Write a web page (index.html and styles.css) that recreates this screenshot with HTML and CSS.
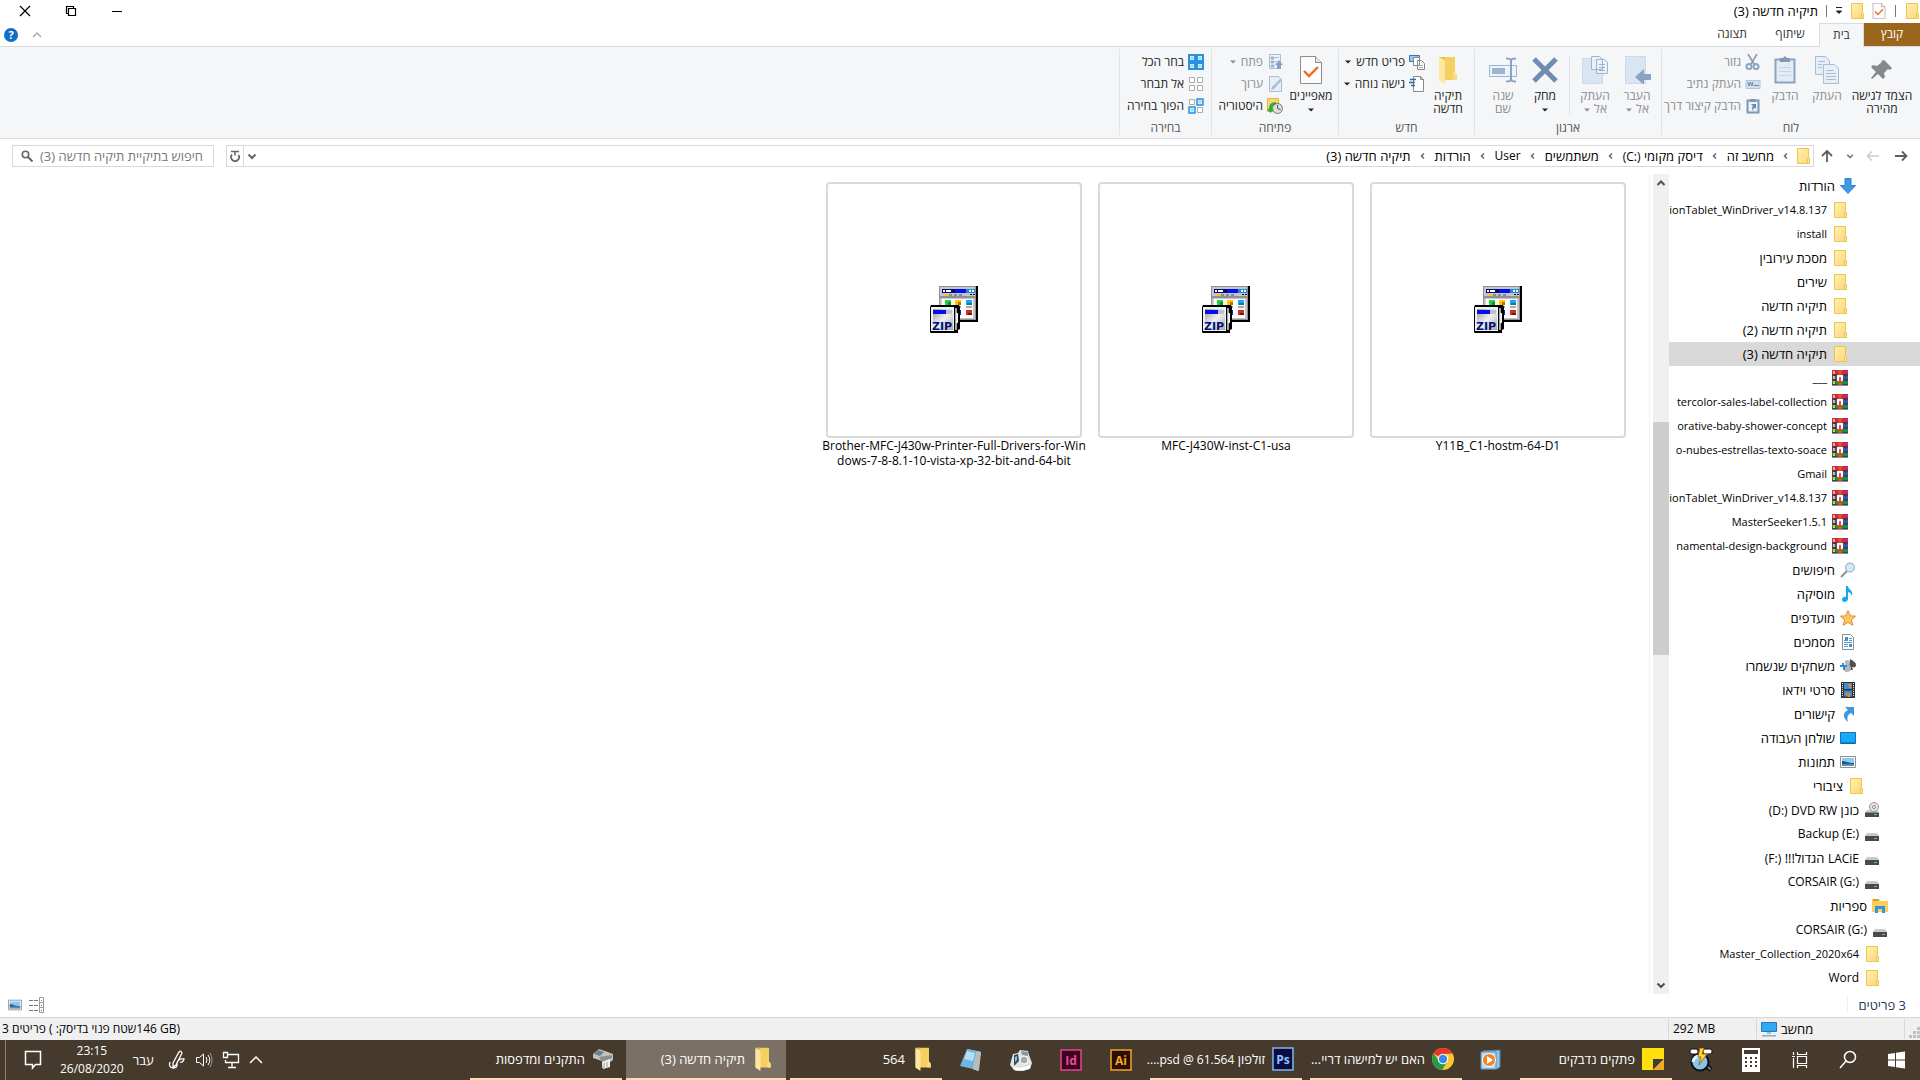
FILE: index.html
```
<!DOCTYPE html>
<html lang="he" dir="rtl">
  <head>
    <meta charset="UTF-8" />
    <meta name="viewport" content="width=device-width, initial-scale=1.0" />
    <title>תיקיה חדשה (3)</title>
    <link rel="stylesheet" href="styles.css" />
  </head>
  <body>
    <svg class="sprite" aria-hidden="true">
      <defs>
        <linearGradient id="gold" x1="0" y1="0" x2="1" y2="1">
          <stop offset="0" stop-color="#fff0ae" />
          <stop offset="1" stop-color="#fcd67e" />
        </linearGradient>
        <linearGradient id="silver" x1="0" y1="0" x2="1" y2="1">
          <stop offset="0" stop-color="#9a9a9a" />
          <stop offset="0.5" stop-color="#f0f0f0" />
          <stop offset="1" stop-color="#a8a8a8" />
        </linearGradient>
      </defs>
      <symbol id="i-folder" viewBox="0 0 16 16">
        <path d="M2.500 .5h11v9.500l1 1v4.500h-12z" fill="url(#gold)" stroke="#edc64a" />
        <path d="M12.500 15.500v-4.500l1-1 1 1v4.500z" fill="#ffe9a0" stroke="#edc64a" />
      </symbol>
      <symbol id="i-bigfolder" viewBox="0 0 20 28">
        <path d="M4 1h13v17l2 2v4H6z" fill="#f6cf61" />
        <path d="M1 1l6 3v24l-6-4z" fill="#fde7a0" />
        <path d="M1 1h6v3z" fill="#e9bd4a" />
        <path d="M15 15l4 4v5h-4z" fill="#f9da86" />
      </symbol>
      <symbol id="i-doccheck" viewBox="0 0 22 28">
        <path d="M.5 .5h15l6 6v21H.5z" fill="#fdfdfd" stroke="#8c8c8c" />
        <path d="M15.500 .5v6h6" fill="#e8e8e8" stroke="#8c8c8c" />
        <path d="M4 15l5 5 9-9" fill="none" stroke="#f26a1b" stroke-width="2.400" />
      </symbol>
      <symbol id="i-rar" viewBox="0 0 16 16">
        <path d="M0 0h16v5H0z" fill="#c8285c" />
        <path d="M0 5h16v5H0z" fill="#4450a8" />
        <path d="M0 10h16v5H0z" fill="#1c8c40" />
        <path d="M0 4.500h16v1H0zM0 9.500h16v1H0zM0 14.500h16v1H0z" fill="#401830" />
        <path d="M1 1h2v3H1zM1 6h2v3H1zM1 11h2v3H1z" fill="#f0b840" />
        <path d="M6 0h4v15H6z" fill="#d8501c" />
        <path d="M5 5h6v6H9V7H7v4H5z" fill="#fff" />
        <path d="M7 7h2v3H7z" fill="#e05a28" />
      </symbol>
      <symbol id="i-download" viewBox="0 0 16 16">
        <path d="M5 .5h6v7h4.500L8 15.500.5 7.500H5z" fill="#3d9be9" stroke="#2b7fc9" />
      </symbol>
      <symbol id="i-lens" viewBox="0 0 16 16">
        <path d="M1 15l6-6" stroke="#8f8f8f" stroke-width="2" />
        <circle cx="10" cy="5.500" r="4.500" fill="#c9ecf8" stroke="#9aa4aa" />
      </symbol>
      <symbol id="i-note" viewBox="0 0 16 16">
        <path d="M6 0h2c0 4 6 4 4 10-1-3-2-3.500-4-4v7c0 2-2 3-3.500 3S2 15 2 13.500 4 10 6 11z" fill="#17a5f5" />
      </symbol>
      <symbol id="i-star" viewBox="0 0 16 16">
        <path d="M8 .6l2.200 5.200 5.400.4-4.200 3.600 1.400 5.500L8 12.400l-4.800 2.900 1.400-5.500L.4 6.200l5.400-.4z" fill="#ffc85c" stroke="#d8903a" />
      </symbol>
      <symbol id="i-document" viewBox="0 0 16 16">
        <path d="M2.500 .5h8l3 3v12h-11z" fill="#fff" stroke="#8a8f94" />
        <path d="M4 6.500h4M9 4.500h3M9 6.500h3M4 8.500h8M4 10.500h4M4 12.500h4" fill="none" stroke="#4f95cf" />
        <path d="M5 3h3v3H5zM9 10h3v3H9z" fill="#3f8fd0" />
      </symbol>
      <symbol id="i-games" viewBox="0 0 16 16">
        <path d="M10 1c3 2 6 3 6 6 0 2-2 3-4 2l1 3H9V9z" fill="#55504b" />
        <path d="M7 2c2 0 3 2 2 3s2 3 2 5-1 4-4 4-3-2-3-4 2-4 1-5 0-3 2-3z" fill="#b5b8ba" />
        <path d="M0 7h2V5h2v2h3v2H5v3H3V9H0z" fill="#318ad4" />
      </symbol>
      <symbol id="i-video" viewBox="0 0 16 16">
        <path d="M1 0h14v16H1z" fill="#333" />
        <path d="M4 1h8v6H4zM4 8.500h8v6H4z" fill="#3b8ddb" />
        <path d="M8 2h3v4H9zM5 11h5v4H8z" fill="#d9872f" />
        <path d="M2.500 1v14M13.500 1v14" stroke="#ddd" stroke-dasharray="1 1" />
      </symbol>
      <symbol id="i-link" viewBox="0 0 16 16">
        <path d="M5 1h9v9l-3-3c-4 2-4 5-3 9-5-4-6-9 0-12z" fill="#3f97e0" />
      </symbol>
      <symbol id="i-desktop" viewBox="0 0 16 16">
        <path d="M.5 2.500h15v11H.5z" fill="#19a9fb" stroke="#1372b4" />
        <path d="M1 13h14" stroke="#0d5d97" />
      </symbol>
      <symbol id="i-picture" viewBox="0 0 16 16">
        <path d="M.5 2.500h15v11H.5z" fill="#fff" stroke="#8a8f94" />
        <path d="M2 4h12v8H2z" fill="#8cc8f2" />
        <path d="M2 7c4 0 5 2 12 2v1H2z" fill="#2a5574" />
        <path d="M2 10h12v2H2z" fill="#4f8fba" />
      </symbol>
      <symbol id="i-drive" viewBox="0 0 16 16">
        <path d="M3 7h10l2 3H1z" fill="#c9c9c9" />
        <path d="M1 10h14v5H1z" fill="#4a4a4a" />
        <path d="M10 12h3v1h-3z" fill="#3ce050" />
      </symbol>
      <symbol id="i-dvd" viewBox="0 0 16 16">
        <path d="M3 8h10l2 3H1z" fill="#c9c9c9" />
        <circle cx="10" cy="5" r="4.500" fill="#e4e4e4" stroke="#9a9a9a" />
        <circle cx="10" cy="5" r="1.500" fill="#fff" stroke="#888" />
        <path d="M1 10.500h14V15H1z" fill="#4a4a4a" />
        <path d="M10 12h3v1h-3z" fill="#3ce050" />
      </symbol>
      <symbol id="i-library" viewBox="0 0 16 16">
        <path d="M0 1h7l1 2h8v11H0z" fill="#f9cf5d" />
        <path d="M1 1h6v2H1z" fill="#e6951e" />
        <path d="M3 15V8h10v7h-3v-4H6v4z" fill="#3a93dd" />
      </symbol>
      <symbol id="i-monitor" viewBox="0 0 16 16">
        <path d="M.5 1.500h15v9H.5z" fill="#2fa8f5" stroke="#2b78ad" />
        <path d="M6 11h4v2H6z" fill="#9cc0d6" />
        <path d="M1 14h14v1.500H1z" fill="#7fb0cc" />
      </symbol>
      <symbol id="i-details" viewBox="0 0 16 16">
        <path d="M1 3.500h9M1 8.500h9M1 13.500h9" stroke="#777" stroke-dasharray="4 1" />
        <path d="M11.500 .5h4v15h-4zM11 5.500h5M11 10.500h5" fill="#fff" stroke="#999" />
        <path d="M13 3h1v1h-1zM13 8h1v1h-1z" fill="#3f8fd0" />
        <path d="M13 13h1v1h-1z" fill="#c33" />
      </symbol>
      <symbol id="i-zip" viewBox="0 0 48 48">
        <path d="M9 0h39v36H9z" fill="#000" />
        <path d="M9 0h37v34H9z" fill="#8f8f8f" />
        <path d="M10 1h35v32H10z" fill="#c6c6c6" />
        <path d="M12 13h31v19H12z" fill="#fff" />
        <path d="M12 3h33v4H12z" fill="#000a70" />
        <path d="M25 3h14v4H25z" fill="#0010ee" />
        <path d="M36 3h9v4h-9z" fill="#1b8ae0" />
        <path d="M13 4h2v2h-2zM16 4h5v2h-5zM39 4h2v2h-2zM42 4h2v2h-2z" fill="#fff" />
        <path d="M15 8h3v2h-3z" fill="#f4c800" />
        <path d="M19 8h3v2h-3zM24 8h3v2h-3zM29 8h3v2h-3z" fill="#8a8a8a" />
        <path d="M10 10h35v2H10z" fill="#909090" />
        <path d="M40 8h2v1h-2zM43 8h2v1h-2z" />
        <path d="M15 14h6v5h-6z" fill="#18d83c" />
        <path d="M18 16h3v3h-3z" fill="#0b8b2a" />
        <path d="M25 14h6v5h-6z" fill="#ffc400" />
        <path d="M28 16h3v3h-3z" fill="#c06c10" />
        <path d="M36 14h6v5h-6z" fill="#16a8ff" />
        <path d="M37 17h5v2h-5z" fill="#147a9a" />
        <path d="M36 24h6v5h-6z" fill="#cc2f1c" />
        <path d="M38 27h4v2h-4z" fill="#741616" />
        <path d="M28 24h3v5h-3z" fill="#2020d8" />
        <path d="M36 20h6v2h-6zM26 20h5v2h-5z" fill="#aaa" />
        <path d="M0 21l1-2h28l1 2v22l-2 1v3H1l-1-1z" fill="#000" />
        <path d="M1 21h23v24H1z" fill="#f2f2f2" />
        <path d="M3 23h20v21H3z" fill="url(#silver)" />
        <path d="M3 24h13v4H3z" fill="#0010ee" />
        <path d="M16 24h6v4h-6z" fill="#c0c0c0" />
        <path d="M25 22h2v22h-2z" fill="#a4a4a4" />
        <path d="M26 27h2v10h-2z" fill="#eee" />
        <text x="12" y="44" text-anchor="middle" class="zip-text">ZIP</text>
      </symbol>
      <symbol id="i-down" viewBox="0 0 8 8">
        <path d="M1 2.500h6L4 5.500z" fill="currentColor" />
      </symbol>
      <symbol id="i-chev" viewBox="0 0 10 10">
        <path d="M1.500 3.500L5 7l3.500-3.500" fill="none" stroke="currentColor" stroke-width="2" />
      </symbol>
      <symbol id="i-crumb" viewBox="0 0 8 8">
        <path d="M5 1.500L2.500 4 5 6.500" fill="none" stroke="#666" stroke-width="1.500" />
      </symbol>
    </svg>

    <header class="titlebar">
      <svg class="icon app-icon"><use href="#i-folder" /></svg>
      <span class="bar"></span>
      <button class="quick" aria-label="מאפיינים"><svg class="icon"><use href="#i-doccheck" /></svg></button>
      <button class="quick" aria-label="תיקיה חדשה"><svg class="icon"><use href="#i-folder" /></svg></button>
      <button class="quick" aria-label="התאמה אישית">
        <svg width="8" height="8" viewBox="0 0 8 8"><path d="M1 .5h6M1.500 4h5L4 6.500z" stroke="#222" fill="#222" /></svg>
      </button>
      <span class="bar"></span>
      <h1>תיקיה חדשה (3)</h1>
      <div class="window-buttons">
        <button aria-label="מזער"><svg width="12" height="12"><path d="M1 6.500h10" stroke="#000" /></svg></button>
        <button aria-label="שחזר">
          <svg width="12" height="12"><path d="M3.500 3.500h7v7h-7zM3 8.500H1.500v-7h7V3" fill="none" stroke="#000" stroke-width="1.200" /></svg>
        </button>
        <button aria-label="סגור"><svg width="12" height="12"><path d="M1 1l10 10M11 1L1 11" stroke="#000" stroke-width="1.200" /></svg></button>
      </div>
    </header>

    <nav class="tabs">
      <button class="tab file">קובץ</button>
      <button class="tab active">בית</button>
      <button class="tab">שיתוף</button>
      <button class="tab">תצוגה</button>
      <div class="tab-tools">
        <button aria-label="מזער רצועה"><svg width="10" height="10" viewBox="0 0 10 10"><path d="M1 7l4-4 4 4" fill="none" stroke="#aaa" stroke-width="1.500" /></svg></button>
        <button aria-label="עזרה">
          <svg width="14" height="14"><circle cx="7" cy="7" r="7" fill="#0f6fc6" /><text x="7" y="11" text-anchor="middle" class="help-text">?</text></svg>
        </button>
      </div>
    </nav>

    <section class="ribbon">
      <div class="group clipboard">
        <div class="tools">
          <button class="big pin">
            <svg width="28" height="28" viewBox="0 0 28 28"><path d="M16 4l8 8-2 2-2-1-4 4 1 4-2 2-5-5-6 5-1-1 5-6-5-5 2-2 4 1 5-4-1-1z" fill="#85898e" /></svg>
            <span>הצמד לגישה<br />מהירה</span>
          </button>
          <button class="big" disabled>
            <svg width="28" height="28" viewBox="0 0 28 28">
              <path d="M2.500 .5h10l4 4v14h-14z" fill="#e6eef7" stroke="#a9bdd4" />
              <path d="M10.500 8.500h11l4 4v15h-15z" fill="#e6eef7" stroke="#a9bdd4" />
              <path d="M5 5.500h7M5 8.500h4M5 11.500h4M13 14.500h8M13 17.500h10M13 20.500h10M13 23.500h10" stroke="#a9bdd4" />
            </svg>
            <span>העתק</span>
          </button>
          <button class="big" disabled>
            <svg width="22" height="28" viewBox="0 0 22 28">
              <path d="M1.500 3.500h19v23h-19z" fill="#e2ebf6" stroke="#8ba3c2" stroke-width="2" />
              <path d="M6 2h3l2-2 2 2h3v4H6z" fill="#8298b6" />
              <path d="M5 11.500h12M5 15.500h12M5 19.500h12" stroke="#c3d2e4" />
            </svg>
            <span>הדבק</span>
          </button>
          <div class="stack">
            <button disabled>
              <svg class="icon"><path d="M3 0l6 10M12 0L6 10" stroke="#8795a8" stroke-width="1.500" /><g fill="none" stroke="#8ba3c2" stroke-width="2"><circle cx="4" cy="12.500" r="2.500" /><circle cx="11" cy="12.500" r="2.500" /></g></svg>
              <span>גזור</span>
            </button>
            <button disabled>
              <svg class="icon"><path d="M1 4.500h14v8H1z" fill="#cfdded" stroke="#b1c4da" /><path d="M3 6l1 4 1.500-4L7 10l1-4M9 9.500h5" fill="none" stroke="#6d87a8" /></svg>
              <span>העתק נתיב</span>
            </button>
            <button disabled>
              <svg class="icon"><path d="M2.500 2.500h11v12h-11z" fill="#eaf1f9" stroke="#7d97b8" stroke-width="2" /><path d="M5 1h6v3H5z" fill="#7d97b8" /><path d="M6 6h5v5L9.500 9.500Q8 10 8 13q-2-3 0-5z" fill="#6d87a8" /></svg>
              <span>הדבק קיצור דרך</span>
            </button>
          </div>
        </div>
        <h2>לוח</h2>
      </div>

      <div class="group organize">
        <div class="tools">
          <button class="big" disabled>
            <svg width="28" height="28" viewBox="0 0 28 28">
              <path d="M2.500 .5h20v27h-20z" fill="#d9e5f3" stroke="#c1d1e4" stroke-dasharray="2 1" />
              <path d="M12 21l9-8v5h7v6h-7v5z" fill="#8ba3c2" />
            </svg>
            <span>העבר<br />אל <svg width="8" height="8"><use href="#i-down" /></svg></span>
          </button>
          <button class="big" disabled>
            <svg width="28" height="28" viewBox="0 0 28 28">
              <path d="M1.500 2.500h20v25h-20z" fill="#d9e5f3" stroke="#c1d1e4" stroke-dasharray="2 1" />
              <path d="M10.500 .5h8l3 3v10h-11zM15.500 3.500h8l3 3v11h-11z" fill="#e9f1f9" stroke="#9fb4ce" />
              <path d="M18 8.500h6M18 11.500h6M18 14.500h6" stroke="#9fb4ce" />
            </svg>
            <span>העתק<br />אל <svg width="8" height="8"><use href="#i-down" /></svg></span>
          </button>
          <span class="divider"></span>
          <button class="big">
            <svg width="28" height="28" viewBox="0 0 28 28"><path d="M3 3l22 22M25 3L3 25" stroke="#6f8cb2" stroke-width="5" /></svg>
            <span>מחק<br /><svg width="8" height="8"><use href="#i-down" /></svg></span>
          </button>
          <button class="big" disabled>
            <svg width="28" height="28" viewBox="0 0 28 28">
              <path d="M.5 9.500h27v11H.5z" fill="#eef4fb" stroke="#9fb4ce" />
              <path d="M3 12h13v6H3z" fill="#9fb4ce" />
              <path d="M17 2.500c3 0 5 0 5 3v17c0 3-2 3-5 3M27 2.500c-3 0-5 0-5 3v17c0 3 2 3 5 3" fill="none" stroke="#8ba3c2" stroke-width="2" />
            </svg>
            <span>שנה<br />שם</span>
          </button>
        </div>
        <h2>ארגון</h2>
      </div>

      <div class="group new">
        <div class="tools">
          <button class="big">
            <svg width="20" height="28"><use href="#i-bigfolder" /></svg>
            <span>תיקיה<br />חדשה</span>
          </button>
          <div class="stack">
            <button>
              <svg class="icon"><path d="M.5 1.500h10v6H.5z" fill="#9cc4ec" stroke="#3577b5" /><path d="M4.500 3.500h6v8h-6zM8.500 6.500h4l3 3v6h-7z" fill="#fff" stroke="#888" /><path d="M10 11.500h4M10 13.500h4" stroke="#aaa" /></svg>
              <span>פריט חדש</span>
              <svg width="8" height="8"><use href="#i-down" /></svg>
            </button>
            <button>
              <svg class="icon"><path d="M4.500 .5h7l3 3v12h-10z" fill="#fff" stroke="#888" /><path d="M11.500 .5v3h3" fill="none" stroke="#888" /><path d="M1 3.500h6M0 6.500h6M2 9.500h4" stroke="#1f6fb2" stroke-width="1.500" /></svg>
              <span>גישה נוחה</span>
              <svg width="8" height="8"><use href="#i-down" /></svg>
            </button>
          </div>
        </div>
        <h2>חדש</h2>
      </div>

      <div class="group open">
        <div class="tools">
          <button class="big">
            <svg width="22" height="28"><use href="#i-doccheck" /></svg>
            <span>מאפיינים<br /><svg width="8" height="8"><use href="#i-down" /></svg></span>
          </button>
          <div class="stack">
            <button disabled>
              <svg class="icon"><path d="M2.500 .5h11v14h-11z" fill="#edf3fa" stroke="#a9bdd4" /><path d="M4 3h3v2H4zM4 7h3v2H4zM4 11h3v2H4zM8 3.500h4M8 7.500h2" fill="#8ba3c2" stroke="#a9bdd4" /><path d="M12 6l4 5h-2v4h-4v-4H8z" fill="#8ba3c2" /></svg>
              <span>פתח</span>
              <svg width="8" height="8"><use href="#i-down" /></svg>
            </button>
            <button disabled>
              <svg class="icon"><path d="M2.500 .5h9l3 3v12h-12z" fill="#e6eef8" stroke="#a9bdd4" /><path d="M15 4l-8 9-3 1 1-3 8-8z" fill="#a9bdd4" /></svg>
              <span>ערוך</span>
            </button>
            <button>
              <svg class="icon"><path d="M.5 .5h11v13H.5z" fill="#fcd770" stroke="#e3b53e" /><circle cx="10.500" cy="10.500" r="5" fill="#ddd" stroke="#777" /><path d="M10.500 7v3.500l3 1" fill="none" stroke="#555" /><path d="M9 6Q5 7 5 11h2l-3.500 4L0 11h2q0-7 7-7z" fill="#2fae3e" /></svg>
              <span>היסטוריה</span>
            </button>
          </div>
        </div>
        <h2>פתיחה</h2>
      </div>

      <div class="group select">
        <div class="tools">
          <div class="stack">
            <button>
              <svg class="icon"><path d="M1 1h6v6H1zM9 1h6v6H9zM1 9h6v6H1zM9 9h6v6H9z" fill="#c4eefb" stroke="#2f8fdf" stroke-width="2" /><path d="M3 4h2M11 4h2M3 12h2M11 12h2" stroke="#69b9e8" /></svg>
              <span>בחר הכל</span>
            </button>
            <button>
              <svg class="icon"><path d="M1.500 1.500h5v5h-5zM9.500 1.500h5v5h-5zM1.500 9.500h5v5h-5zM9.500 9.500h5v5h-5z" fill="#fff" stroke="#aaa" /></svg>
              <span>אל תבחר</span>
            </button>
            <button>
              <svg class="icon"><path d="M1.500 1.500h5v5h-5zM9.500 9.500h5v5h-5z" fill="#fff" stroke="#aaa" /><path d="M9 1h6v6H9zM1 9h6v6H1z" fill="#c4eefb" stroke="#2f8fdf" stroke-width="1.500" /><path d="M11 4h2M3 12h2" stroke="#69b9e8" /></svg>
              <span>הפוך בחירה</span>
            </button>
          </div>
        </div>
        <h2>בחירה</h2>
      </div>
    </section>

    <div class="address-row">
      <div class="history">
        <button aria-label="אחורה"><svg width="14" height="14"><path d="M1 7h11M8 2.500L12.500 7 8 11.500" fill="none" stroke="#5e5e5e" stroke-width="1.800" /></svg></button>
        <button aria-label="קדימה" disabled><svg width="14" height="14"><path d="M13 7H2M6 2.500L1.500 7 6 11.500" fill="none" stroke="#ccc" stroke-width="1.500" /></svg></button>
        <button class="recent" aria-label="מיקומים אחרונים"><svg width="8" height="8" viewBox="0 0 10 10"><use href="#i-chev" /></svg></button>
        <button aria-label="למעלה"><svg width="14" height="14"><path d="M7 13V2M2 7l5-5 5 5" fill="none" stroke="#5e5e5e" stroke-width="1.800" /></svg></button>
      </div>
      <div class="address">
        <svg class="icon"><use href="#i-folder" /></svg>
        <svg class="crumb" width="8" height="8"><use href="#i-crumb" /></svg>
        <a href="#">מחשב זה</a>
        <svg class="crumb" width="8" height="8"><use href="#i-crumb" /></svg>
        <a href="#">דיסק מקומי <bdi class="en">(C:)</bdi></a>
        <svg class="crumb" width="8" height="8"><use href="#i-crumb" /></svg>
        <a href="#">משתמשים</a>
        <svg class="crumb" width="8" height="8"><use href="#i-crumb" /></svg>
        <a href="#" class="en">User</a>
        <svg class="crumb" width="8" height="8"><use href="#i-crumb" /></svg>
        <a href="#">הורדות</a>
        <svg class="crumb" width="8" height="8"><use href="#i-crumb" /></svg>
        <a href="#">תיקיה חדשה (3)</a>
        <button class="drop" aria-label="מיקומים קודמים"><svg width="10" height="10"><use href="#i-chev" /></svg></button>
        <button class="refresh" aria-label="רענן">
          <svg width="12" height="12"><path d="M3 4.500A4 4 0 1 0 9.500 5" fill="none" stroke="#666" stroke-width="1.700" /><path d="M2 1.500h4v4M6 1.500h4" fill="none" stroke="#666" stroke-width="1.500" /></svg>
        </button>
      </div>
      <label class="search">
        <input type="text" placeholder="חיפוש בתיקיית תיקיה חדשה (3)" aria-label="חיפוש" />
        <svg width="12" height="12"><circle cx="4.500" cy="4.500" r="3.200" fill="none" stroke="#666" stroke-width="1.600" /><path d="M7 7l4.500 4.500" stroke="#666" stroke-width="2" /></svg>
      </label>
    </div>

    <main>
      <aside class="tree">
        <ul>
          <li class="l3"><svg class="icon"><use href="#i-download" /></svg><span>הורדות</span></li>
          <li class="l4"><svg class="icon"><use href="#i-folder" /></svg><bdi class="en">ionTablet_WinDriver_v14.8.137</bdi></li>
          <li class="l4"><svg class="icon"><use href="#i-folder" /></svg><bdi class="en">install</bdi></li>
          <li class="l4"><svg class="icon"><use href="#i-folder" /></svg><span>מסכת עירובין</span></li>
          <li class="l4"><svg class="icon"><use href="#i-folder" /></svg><span>שירים</span></li>
          <li class="l4"><svg class="icon"><use href="#i-folder" /></svg><span>תיקיה חדשה</span></li>
          <li class="l4"><svg class="icon"><use href="#i-folder" /></svg><span>תיקיה חדשה (2)</span></li>
          <li class="l4 selected"><svg class="icon"><use href="#i-folder" /></svg><span>תיקיה חדשה (3)</span></li>
          <li class="l4"><svg class="icon"><use href="#i-rar" /></svg><bdi class="en">___</bdi></li>
          <li class="l4"><svg class="icon"><use href="#i-rar" /></svg><bdi class="en">tercolor-sales-label-collection</bdi></li>
          <li class="l4"><svg class="icon"><use href="#i-rar" /></svg><bdi class="en">orative-baby-shower-concept</bdi></li>
          <li class="l4"><svg class="icon"><use href="#i-rar" /></svg><bdi class="en">o-nubes-estrellas-texto-soace</bdi></li>
          <li class="l4"><svg class="icon"><use href="#i-rar" /></svg><bdi class="en">Gmail</bdi></li>
          <li class="l4"><svg class="icon"><use href="#i-rar" /></svg><bdi class="en">ionTablet_WinDriver_v14.8.137</bdi></li>
          <li class="l4"><svg class="icon"><use href="#i-rar" /></svg><bdi class="en">MasterSeeker1.5.1</bdi></li>
          <li class="l4"><svg class="icon"><use href="#i-rar" /></svg><bdi class="en">namental-design-background</bdi></li>
          <li class="l3"><svg class="icon"><use href="#i-lens" /></svg><span>חיפושים</span></li>
          <li class="l3"><svg class="icon"><use href="#i-note" /></svg><span>מוסיקה</span></li>
          <li class="l3"><svg class="icon"><use href="#i-star" /></svg><span>מועדפים</span></li>
          <li class="l3"><svg class="icon"><use href="#i-document" /></svg><span>מסמכים</span></li>
          <li class="l3"><svg class="icon"><use href="#i-games" /></svg><span>משחקים שנשמרו</span></li>
          <li class="l3"><svg class="icon"><use href="#i-video" /></svg><span>סרטי וידאו</span></li>
          <li class="l3"><svg class="icon"><use href="#i-link" /></svg><span>קישורים</span></li>
          <li class="l3"><svg class="icon"><use href="#i-desktop" /></svg><span>שולחן העבודה</span></li>
          <li class="l3"><svg class="icon"><use href="#i-picture" /></svg><span>תמונות</span></li>
          <li class="l2"><svg class="icon"><use href="#i-folder" /></svg><span>ציבורי</span></li>
          <li class="l1"><svg class="icon"><use href="#i-dvd" /></svg><span>כונן <bdi class="en">DVD RW</bdi> <bdi class="en">(D:)</bdi></span></li>
          <li class="l1"><svg class="icon"><use href="#i-drive" /></svg><bdi class="en">Backup (E:)</bdi></li>
          <li class="l1"><svg class="icon"><use href="#i-drive" /></svg><span><bdi class="en">LACiE</bdi> הגדול!!! <bdi class="en">(F:)</bdi></span></li>
          <li class="l1"><svg class="icon"><use href="#i-drive" /></svg><bdi class="en">CORSAIR (G:)</bdi></li>
          <li class="l0"><svg class="icon"><use href="#i-library" /></svg><span>ספריות</span></li>
          <li class="l0"><svg class="icon"><use href="#i-drive" /></svg><bdi class="en">CORSAIR (G:)</bdi></li>
          <li class="l1"><svg class="icon"><use href="#i-folder" /></svg><bdi class="en long">Master_Collection_2020x64</bdi></li>
          <li class="l1"><svg class="icon"><use href="#i-folder" /></svg><bdi class="en">Word</bdi></li>
        </ul>
      </aside>
      <div class="scrollbar">
        <svg width="10" height="10" viewBox="0 0 10 10"><path d="M1.500 7L5 3.500 8.500 7" fill="none" stroke="#505050" stroke-width="2" /></svg>
        <span class="before"></span>
        <span class="thumb"></span>
        <span class="after"></span>
        <svg width="10" height="10"><use href="#i-chev" /></svg>
      </div>
      <section class="files">
        <figure>
          <div class="thumbnail"><svg width="48" height="48"><use href="#i-zip" /></svg></div>
          <figcaption>Y11B_C1-hostm-64-D1</figcaption>
        </figure>
        <figure>
          <div class="thumbnail"><svg width="48" height="48"><use href="#i-zip" /></svg></div>
          <figcaption>MFC-J430W-inst-C1-usa</figcaption>
        </figure>
        <figure>
          <div class="thumbnail"><svg width="48" height="48"><use href="#i-zip" /></svg></div>
          <figcaption>Brother-MFC-J430w-Printer-Full-Drivers-for-Win<br />dows-7-8-8.1-10-vista-xp-32-bit-and-64-bit</figcaption>
        </figure>
      </section>
    </main>

    <div class="summary">
      <span class="count">3 פריטים</span>
      <div class="views">
        <button aria-label="פרטים"><svg class="icon"><use href="#i-details" /></svg></button>
        <button aria-label="תמונות גדולות"><svg width="14" height="14"><use href="#i-picture" /></svg></button>
      </div>
    </div>

    <footer class="status" dir="ltr">
      <span class="free">3 <bdi>פריטים</bdi> ( <bdi>&rlm;שטח פנוי בדיסק:&rlm;</bdi><span class="en">146 GB)</span></span>
      <span class="cell size en">292 MB</span>
      <span class="cell zone"><svg class="icon"><use href="#i-monitor" /></svg>מחשב</span>
      <span class="cell grip">
        <svg width="12" height="12"><path d="M8 0h3v3H8zM4 4h3v3H4zM8 4h3v3H8zM0 8h3v3H0zM4 8h3v3H4zM8 8h3v3H8z" fill="#bfbfbf" /></svg>
      </span>
    </footer>

    <nav class="taskbar">
      <button class="sys" aria-label="התחל"><svg width="17" height="18" viewBox="0 0 17 18"><path d="M0 3l7-1v6.500H0zM8 1.800L17 .5v8H8zM0 9.500h7V16l-7-1zM8 9.500h9v8l-9-1.300z" fill="#fff" /></svg></button>
      <button class="sys" aria-label="חיפוש"><svg width="18" height="20"><circle cx="11" cy="7" r="5.500" fill="none" stroke="#fff" stroke-width="1.500" /><path d="M7 11l-6 7" stroke="#fff" stroke-width="1.500" /></svg></button>
      <button class="sys" aria-label="תצוגת משימות"><svg width="18" height="18"><path d="M6.500 5.500h9v7h-9zM6.500 1v2.500h9V1M6.500 17v-2.500h9V17M2.500 1v3M2.500 7v10M1 5.500h3" fill="none" stroke="#fff" stroke-width="1.200" /></svg></button>
      <button class="app" aria-label="מחשבון"><svg width="18" height="24"><path d="M0 0h18v24H0z" fill="#fff" /><path d="M2 2h14v4H2z" fill="#463a2c" /><path d="M3 10h12M3 14h12M3 18h12" stroke="#463a2c" stroke-width="2" stroke-dasharray="2 3" /></svg></button>
      <button class="app" aria-label="חיפוש מהיר">
        <svg width="24" height="24"><path d="M17 17l5 5" stroke="#111" stroke-width="5" /><path d="M17 17l4.500 4.500" stroke="#777" stroke-width="2" /><circle cx="11" cy="14" r="8.500" fill="#86c3ee" stroke="#111" stroke-width="2" /><path d="M4 14a7 7 0 0 1 6-6" stroke="#e5f5ff" stroke-width="3" fill="none" /><rect x="1" y="1" width="8" height="5" rx="2" fill="#fff" stroke="#111" /><rect x="14" y="1" width="9" height="5" rx="2" fill="#fff" stroke="#111" /><path d="M11 0h4l-2 6h5l-8 11 2-8H9z" fill="#ffd92e" stroke="#a76d0a" /></svg>
      </button>
      <button class="task">
        <svg width="24" height="24" viewBox="0 0 24 24"><path d="M1 1h22v22H1z" fill="#ffdf0c" /><path d="M12 23V12h11z" fill="#3c3c3c" /><path d="M12 23l11-11v11z" fill="#f6a821" /></svg>
        <span>פתקים נדבקים</span>
      </button>
      <button class="app" aria-label="נגן מדיה">
        <svg width="22" height="22"><path d="M3 2l17-1v17l-3 2H3z" fill="#8fc4e8" stroke="#4f83ad" /><path d="M1 3h15v17H1z" fill="#b9daf0" stroke="#5a8cb2" /><circle cx="9" cy="11" r="6.500" fill="#f58220" stroke="#fff" /><path d="M7 7l6 4-6 4z" fill="#fff" /></svg>
      </button>
      <button class="task">
        <svg width="24" height="24" viewBox="0 0 24 24"><circle cx="12" cy="12" r="11" fill="#fbc62f" /><path d="M12 12L2.500 6.500A11 11 0 0 1 21.500 6.500L12 7z" fill="#e2372b" /><path d="M2.500 6.500A11 11 0 0 0 11 23l5-8-8-1z" fill="#269a4b" /><circle cx="12" cy="12" r="5.200" fill="#fff" /><circle cx="12" cy="12" r="4.200" fill="#3c87ee" /></svg>
        <span>האם יש למישהו דריי...</span>
      </button>
      <button class="task">
        <svg width="24" height="24" viewBox="0 0 24 24"><path d="M2 1h20v22H2z" fill="#0b0b45" stroke="#7fb8ee" stroke-width="1.500" /><text x="12" y="17" text-anchor="middle" class="adobe ps">Ps</text></svg>
        <span>זולפון <bdi class="en">....psd @ 61.564</bdi></span>
      </button>
      <button class="app" aria-label="Illustrator"><svg width="22" height="24"><path d="M1 2h20v20H1z" fill="#2a0e04" stroke="#f5a623" stroke-width="1.500" /><text x="11" y="17" text-anchor="middle" class="adobe ai">Ai</text></svg></button>
      <button class="app" aria-label="InDesign"><svg width="22" height="24"><path d="M1 2h20v20H1z" fill="#3a0520" stroke="#e8418f" stroke-width="1.500" /><text x="11" y="17" text-anchor="middle" class="adobe id">Id</text></svg></button>
      <button class="app" aria-label="תמונות">
        <svg width="24" height="24"><path d="M1 17l3-11 5-1 2-3 8 1 1 4 3 8-2 6-7 2-9-1z" fill="#dfe3e5" /><path d="M5 7l4-1 1 7-5 5z" fill="#3a4a56" /><path d="M6 9l2-1v4l-2 2z" fill="#8cc2e4" /><path d="M12 3l7 1v4l-6-1z" fill="#8c979e" /><circle cx="15" cy="12" r="4" fill="#a2abb0" stroke="#fff" /><path d="M4 18q8 4 17-1v3q-8 4-16 2z" fill="#fff" /></svg>
      </button>
      <button class="app" aria-label="פנקס רשימות">
        <svg width="24" height="24"><path d="M8 1l14 3-3 19-5-2z" fill="#e4e7e8" /><path d="M8 1l10 2-4 18L1 18z" fill="#6db6e0" /><path d="M8 3l8 2-2 8L5 11z" fill="#b8def2" /><path d="M14 21l4-18 4 1-2 19z" fill="#b8bcbd" /></svg>
      </button>
      <button class="task folder">
        <svg width="18" height="24"><use href="#i-bigfolder" /></svg>
        <span>564</span>
      </button>
      <button class="task folder current">
        <svg width="18" height="24"><use href="#i-bigfolder" /></svg>
        <span>תיקיה חדשה (3)</span>
      </button>
      <button class="task">
        <svg width="24" height="24" viewBox="0 0 24 24"><path d="M2 7l6-5 6 2 8 3v6l-4 3v4l-7 1v-7l-9-3z" fill="#bfc3c4" /><path d="M7 3l6 2-4 4-6-2z" fill="#6b7f8c" /><path d="M8 10l13-2v3l-10 4z" fill="#8b8f90" /><path d="M11 15l8-3v8l-7 2z" fill="#eef0f0" /><path d="M13 16v5M16 15v5" stroke="#999" /></svg>
        <span>התקנים ומדפסות</span>
      </button>
      <div class="tray">
        <svg width="14" height="14"><path d="M1 10l6-6 6 6" fill="none" stroke="#fff" stroke-width="1.500" /></svg>
        <svg width="18" height="18"><path d="M6 3.500h10.500v8h-13V9M10 12v4M6 16.500h8M1.500 1.500h4v5h-4z" fill="none" stroke="#fff" stroke-width="1.300" /></svg>
        <svg width="18" height="18"><path d="M1.500 6.500h3l4-3.500v12l-4-3.500h-3z" fill="none" stroke="#fff" /><path d="M11 6q2 3 0 6M13 4q3.500 5 0 10" fill="none" stroke="#fff" /><path d="M15 2q4 7 0 14" fill="none" stroke="#999" /></svg>
        <svg width="18" height="20"><path d="M5 13L11 2q2-2 3 1L8 15l-3 2zM2 12q-2 5 3 6 5 0 4-5 1-5 7-4-1 4-4 3" fill="none" stroke="#fff" stroke-width="1.300" /></svg>
        <span class="lang">עבר</span>
        <time>23:15<br />26/08/2020</time>
        <button aria-label="התראות"><svg width="18" height="20"><path d="M1.500 1.500h15v13h-5L8.500 18v-3.500h-7z" fill="none" stroke="#fff" stroke-width="1.500" /></svg></button>
        <span class="peek"></span>
      </div>
    </nav>
  </body>
</html>
```
FILE: styles.css
```
* {
  box-sizing: border-box;
}
body {
  margin: 0;
  height: 100vh;
  display: flex;
  flex-direction: column;
  overflow: hidden;
  font-family: "Open Sans", "Noto Sans", sans-serif;
  font-size: 13px;
  line-height: 16px;
  color: #000;
  background-color: #fff;
  white-space: nowrap;
}
button {
  font: inherit;
  color: inherit;
  background: none;
  border: none;
  padding: 0;
  display: flex;
  align-items: center;
  justify-content: center;
}
h1,
h2,
figure,
ul {
  margin: 0;
  padding: 0;
  font-size: 13px;
  font-weight: normal;
}
a {
  color: inherit;
  text-decoration: none;
}
svg {
  flex: none;
}
.sprite {
  position: absolute;
  width: 0;
  height: 0;
}
.icon {
  width: 16px;
  height: 16px;
}
.en {
  font-size: 12px;
}
.en.long {
  font-size: 11px;
}

/* title bar */
.titlebar {
  display: flex;
  align-items: center;
  height: 23px;
  padding-bottom: 2px;
}
.titlebar .bar {
  width: 1px;
  height: 12px;
  margin: 0 8px;
  background-color: #777;
}
.quick {
  min-width: 8px;
  margin-left: 6px;
}
.quick + .bar {
  margin: 0 2px 0 8px;
}
.window-buttons {
  display: flex;
  gap: 34px;
  margin-right: auto;
  padding-left: 19px;
}

/* ribbon tabs */
.tabs {
  display: flex;
  height: 23px;
  font-size: 12px;
}
.tab {
  width: 58px;
  padding-bottom: 2px;
  color: #333;
}
.tab.file {
  width: 56px;
  color: #fff;
  background-color: #9a661b;
}
.tab.active {
  z-index: 1;
  width: 45px;
  height: 24px;
  border: 1px solid #dadbdc;
  border-bottom: none;
  background-color: #f5f6f7;
}
.tab-tools {
  display: flex;
  gap: 14px;
  margin-right: auto;
  padding-left: 4px;
}

/* ribbon */
.ribbon {
  display: flex;
  height: 93px;
  padding: 2px 0 3px;
  border-top: 1px solid #dadbdc;
  border-bottom: 1px solid #dadbdc;
  background-color: #f5f6f7;
  font-size: 12px;
}
.group {
  display: flex;
  flex-direction: column;
  justify-content: space-between;
  border-left: 1px solid #e2e3e4;
}
.group h2 {
  text-align: center;
  font-size: 12px;
  line-height: 14px;
  color: #555;
}
.tools {
  display: flex;
}
.big {
  flex: none;
  flex-direction: column;
  justify-content: flex-start;
  width: 42px;
  padding-top: 7px;
  gap: 5px;
  line-height: 13px;
  color: #222;
}
.big.pin {
  width: 68px;
}
.big span svg {
  vertical-align: middle;
}
.stack {
  display: flex;
  flex-direction: column;
  padding-top: 2px;
}
.stack button {
  height: 22px;
  gap: 4px;
  justify-content: flex-start;
  color: #222;
}
button:disabled {
  color: #8a8d91;
}
.clipboard {
  width: 259px;
}
.clipboard .tools {
  padding-right: 4px;
}
.clipboard .stack {
  padding-right: 3px;
}
.organize {
  width: 187px;
}
.organize .tools {
  padding-right: 3px;
}
.divider {
  width: 1px;
  margin: 7px 4px 0 3px;
  background-color: #e2e3e4;
}
.new {
  width: 136px;
}
.new .tools {
  padding-right: 5px;
}
.new .stack {
  padding-right: 2px;
}
.open {
  width: 127px;
}
.open .big {
  width: 54px;
}
.open .stack {
  padding-right: 1px;
}
.select {
  width: 92px;
}
.select .stack {
  padding-right: 7px;
}

/* address row */
.address-row {
  display: flex;
  align-items: center;
  flex: none;
  height: 35px;
  padding: 0 12px 1px;
}
.history {
  display: flex;
  align-items: center;
  width: 94px;
  gap: 14px;
}
.history .recent {
  color: #777;
  margin: 0 -2px;
}
.address {
  flex: 1;
  display: flex;
  align-items: center;
  height: 22px;
  padding-right: 2px;
  border: 1px solid #d9d9d9;
}
.crumb {
  margin: 0 8px;
}
.icon + .crumb {
  margin: 0 5px 0 8px;
}
.drop {
  width: 16px;
  height: 20px;
  margin-right: auto;
  color: #666;
}
.refresh {
  width: 17px;
  height: 20px;
  border-right: 1px solid #d9d9d9;
}
.search {
  display: flex;
  align-items: center;
  width: 202px;
  height: 22px;
  margin-right: 12px;
  padding: 0 10px 0 8px;
  border: 1px solid #d9d9d9;
}
.search input {
  flex: 1;
  min-width: 0;
  padding: 0;
  border: none;
  outline: none;
  font: inherit;
}
.search input::placeholder {
  color: #777;
}

/* tree + files */
main {
  flex: 1;
  min-height: 0;
  display: flex;
}
.tree {
  width: 251px;
  overflow: hidden;
}
.tree ul {
  list-style: none;
}
.tree li {
  display: flex;
  align-items: center;
  gap: 5px;
  height: 24px;
}
.tree .l0 {
  padding-right: 32px;
}
.tree .l1 {
  padding-right: 40px;
}
.tree .l2 {
  padding-right: 56px;
}
.tree .l3 {
  padding-right: 64px;
}
.tree .l4 {
  padding-right: 72px;
}
.tree .l4 .en {
  font-size: 11px;
}
.tree .selected {
  background-color: #d9d9d9;
}
.scrollbar {
  display: flex;
  flex-direction: column;
  align-items: center;
  width: 16px;
  padding: 4px 0;
  color: #505050;
  background-color: #f0f0f0;
}
.scrollbar .before {
  flex: 234;
}
.scrollbar .thumb {
  flex: 233;
  align-self: stretch;
  background-color: #cdcdcd;
}
.scrollbar .after {
  flex: 325;
}
.files {
  flex: 1;
  display: flex;
  gap: 16px;
  margin-right: 3px;
  padding: 8px 23px;
  border-right: 1px solid #f0f0f0;
}
.files figure {
  width: 256px;
}
.thumbnail {
  display: flex;
  align-items: center;
  justify-content: center;
  height: 256px;
  border: 2px solid #d9d9d9;
  border-radius: 4px;
}
.files figcaption {
  margin: 0 -6px;
  direction: ltr;
  text-align: center;
  font-size: 12px;
  line-height: 15px;
}
.zip-text {
  direction: ltr;
  font: bold 11px "DejaVu Sans", sans-serif;
  fill: #00107c;
}

/* summary and status */
.summary {
  display: flex;
  align-items: center;
  justify-content: space-between;
  height: 23px;
  padding: 0 14px 2px 8px;
}
.count {
  padding-left: 10px;
  border-left: 1px solid #eee;
  color: #1e395b;
}
.views {
  display: flex;
  gap: 6px;
}
.status {
  display: flex;
  align-items: center;
  height: 23px;
  border-top: 1px solid #d7d7d7;
  background-color: #f0f0f0;
}
.free {
  flex: 1;
  padding-left: 2px;
  font-size: 12px;
}
.cell {
  display: flex;
  align-items: center;
  gap: 4px;
  height: 20px;
  padding-left: 4px;
  border-left: 1px solid #d7d7d7;
}
.size {
  width: 88px;
}
.zone {
  width: 148px;
}
.grip {
  width: 16px;
  align-items: flex-end;
}

/* taskbar */
.taskbar {
  display: flex;
  height: 40px;
  color: #fff;
  background-color: #463a2c;
}
.sys {
  width: 48px;
}
.app {
  width: 50px;
}
.task {
  justify-content: flex-start;
  gap: 6px;
  width: 152px;
  margin: 0 4px;
  padding-right: 7px;
  border-bottom: 2px solid #ffdcb0;
}
.task.folder {
  gap: 9px;
  padding-right: 10px;
}
.task.current {
  width: 160px;
  margin: 0;
  padding-right: 14px;
  background-color: #7a7065;
}
.tray {
  display: flex;
  align-items: center;
  gap: 9px;
  margin-right: auto;
}
.tray .lang {
  margin-right: 5px;
}
.tray time {
  direction: ltr;
  text-align: center;
  font-size: 12px;
  line-height: 18px;
}
.tray button {
  margin: 0 9px;
}
.peek {
  width: 6px;
  height: 40px;
  border-right: 1px solid #8b8379;
}
.adobe {
  font: bold 12px "Open Sans", sans-serif;
}
.ps {
  fill: #8ec5f5;
}
.ai {
  fill: #f5a623;
}
.id {
  fill: #f0479a;
}
.help-text {
  font: bold 11px "Open Sans", sans-serif;
  fill: #fff;
}
```
